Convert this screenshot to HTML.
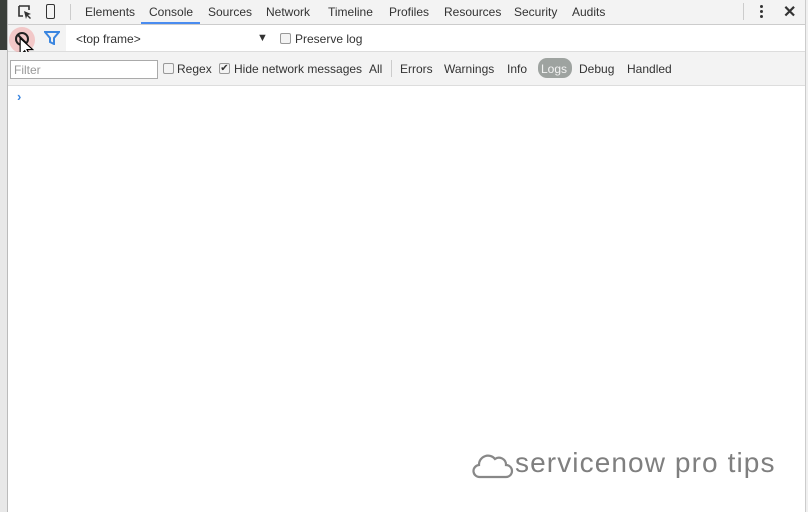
<!DOCTYPE html>
<html><head><style>
*{margin:0;padding:0;box-sizing:border-box}
body{width:808px;height:512px;background:#fff;font-family:"Liberation Sans",sans-serif;font-size:12px;color:#333;position:relative;overflow:hidden}
.a{position:absolute;white-space:nowrap}
</style></head><body>
<div class="a" style="left:0;top:0;width:7px;height:50px;background:#3a3f3a"></div>
<div class="a" style="left:0;top:50px;width:7px;height:462px;background:#e8e8e8"></div>
<div class="a" style="left:7px;top:0;width:1px;height:512px;background:#bbb"></div>
<div class="a" style="left:805px;top:0;width:3px;height:512px;background:#f0f0f0;border-left:1px solid #ccc"></div>
<!-- tab bar -->
<div class="a" style="left:8px;top:0;width:797px;height:25px;background:#f3f3f3;border-bottom:1px solid #ccc"></div>
<svg class="a" style="left:17px;top:4px" width="16" height="16" viewBox="0 0 16 16"><path d="M2 2h10v4M2 2v10h4" fill="none" stroke="#333" stroke-width="1.6"/><path d="M7 7l7 3-3 1 3 3-1 1-3-3-1 3z" fill="#333"/></svg>
<div class="a" style="left:46px;top:4px;width:9px;height:15px;border:1.6px solid #333;border-radius:2px"></div>
<div class="a" style="left:70px;top:4px;width:1px;height:16px;background:#ccc"></div>
<div class="a" style="left:85px;top:5px">Elements</div>
<div class="a" style="left:149px;top:5px">Console</div>
<div class="a" style="left:141px;top:22px;width:59px;height:2px;background:#4a8cf0"></div>
<div class="a" style="left:208px;top:5px">Sources</div>
<div class="a" style="left:266px;top:5px">Network</div>
<div class="a" style="left:328px;top:5px">Timeline</div>
<div class="a" style="left:389px;top:5px">Profiles</div>
<div class="a" style="left:444px;top:5px">Resources</div>
<div class="a" style="left:514px;top:5px">Security</div>
<div class="a" style="left:572px;top:5px">Audits</div>
<div class="a" style="left:743px;top:3px;width:1px;height:17px;background:#ccc"></div>
<div class="a" style="left:760px;top:5px;width:3px;height:3px;background:#333;border-radius:50%;box-shadow:0 5px 0 #333,0 10px 0 #333"></div>
<div class="a" style="left:783px;top:2px;font-size:16px;font-weight:bold;color:#333">✕</div>
<!-- row 2 -->
<div class="a" style="left:8px;top:25px;width:58px;height:26px;background:#f3f3f3"></div>
<div class="a" style="left:8px;top:51px;width:797px;height:1px;background:#ddd"></div>
<div class="a" style="left:9px;top:27px;width:26px;height:26px;border-radius:50%;background:rgba(240,120,120,.35)"></div>
<svg class="a" style="left:14px;top:31px" width="16" height="16" viewBox="0 0 16 16"><circle cx="8" cy="8" r="6" fill="none" stroke="#222" stroke-width="2"/><path d="M4 4l8 8" stroke="#222" stroke-width="2"/></svg>
<svg class="a" style="left:19px;top:37px" width="16" height="24" viewBox="0 0 14 21"><path d="M1 1v15l4-4 3 6 2-1-3-6h5z" fill="#fff" stroke="#000" stroke-width="1"/></svg>
<svg class="a" style="left:44px;top:31px" width="16" height="14" viewBox="0 0 16 14"><path d="M1 1h14l-5 6v6l-4-2V7z" fill="none" stroke="#3b86e0" stroke-width="2"/></svg>
<div class="a" style="left:76px;top:32px">&lt;top frame&gt;</div>
<div class="a" style="left:257px;top:32px;font-size:11px">▼</div>
<div class="a" style="left:280px;top:33px;width:11px;height:11px;border:1px solid #999;border-radius:2px;background:#f3f3f3"></div>
<div class="a" style="left:295px;top:32px;color:#333">Preserve log</div>
<!-- row 3 -->
<div class="a" style="left:8px;top:52px;width:797px;height:34px;background:#f3f3f3;border-bottom:1px solid #ddd"></div>
<div class="a" style="left:10px;top:60px;width:148px;height:19px;border:1px solid #aaa;background:#fff;color:#999;padding:2px 3px">Filter</div>
<div class="a" style="left:163px;top:63px;width:11px;height:11px;border:1px solid #999;border-radius:2px;background:#f3f3f3"></div>
<div class="a" style="left:177px;top:62px">Regex</div>
<div class="a" style="left:219px;top:63px;width:11px;height:11px;border:1px solid #999;border-radius:2px;background:#f3f3f3;font-size:10px;line-height:9px;text-align:center">✔</div>
<div class="a" style="left:234px;top:62px">Hide network messages</div>
<div class="a" style="left:369px;top:62px">All</div>
<div class="a" style="left:391px;top:60px;width:1px;height:17px;background:#ccc"></div>
<div class="a" style="left:400px;top:62px">Errors</div>
<div class="a" style="left:444px;top:62px">Warnings</div>
<div class="a" style="left:507px;top:62px">Info</div>
<div class="a" style="left:538px;top:58px;width:34px;height:20px;border-radius:9px;background:#9ea3a0"></div>
<div class="a" style="left:541px;top:62px;color:#f3f3f3">Logs</div>
<div class="a" style="left:579px;top:62px">Debug</div>
<div class="a" style="left:627px;top:62px">Handled</div>
<div class="a" style="left:17px;top:89px;color:#3b86e0;font-weight:bold;font-size:13px">›</div>
<!-- watermark -->
<svg class="a" style="left:472px;top:450px" width="42" height="30" viewBox="0 0 42 30"><path d="M8 27a6 6 0 0 1-1-12 9 9 0 0 1 16-6 7 7 0 0 1 11 6 6 6 0 0 1 0 12z" fill="none" stroke="#888" stroke-width="2.2"/></svg>
<div class="a" style="left:515px;top:447px;font-size:28px;color:#7f7f7f;letter-spacing:1.1px">servicenow pro tips</div>
</body></html>
